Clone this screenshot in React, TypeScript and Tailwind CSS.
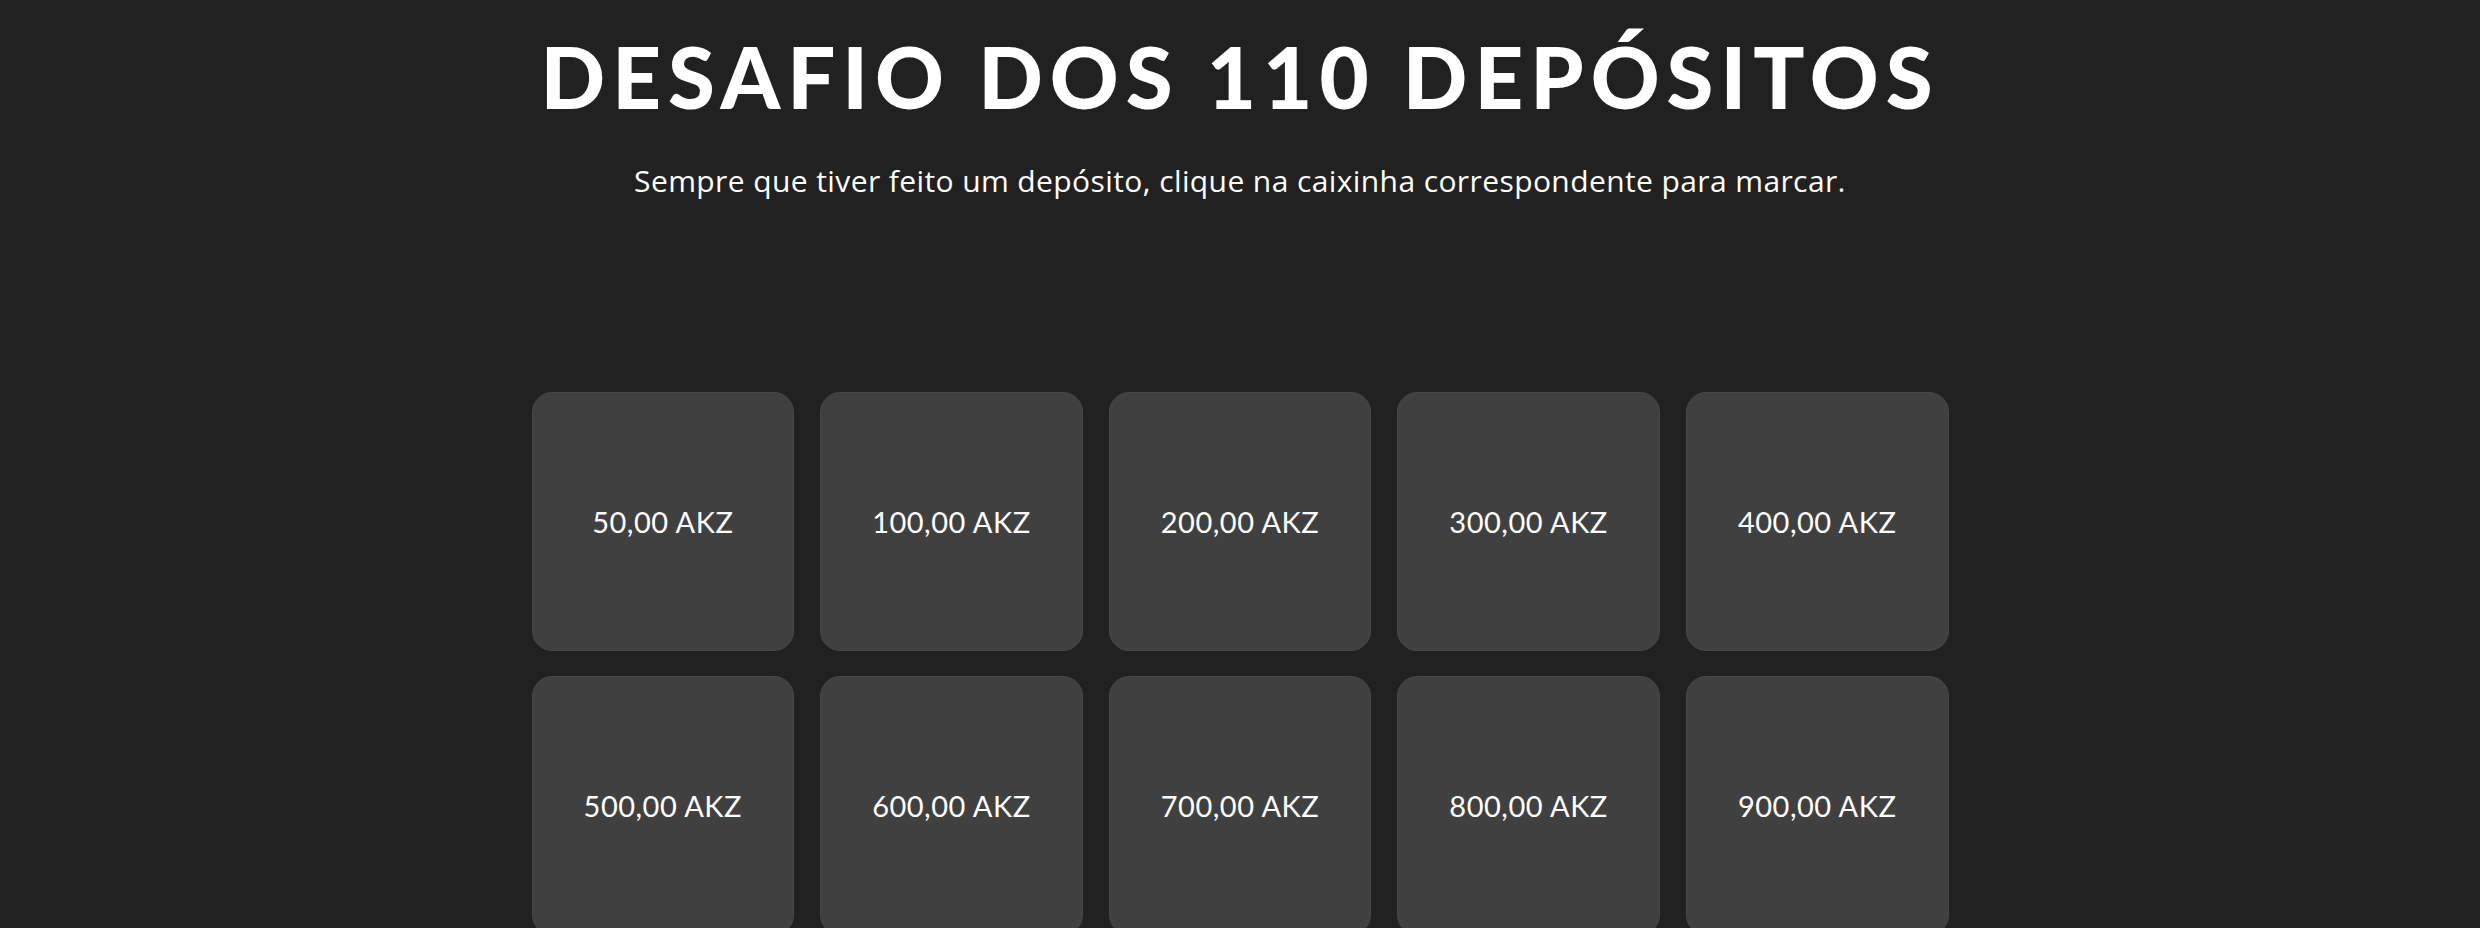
const VALORES = [50, 100, 200, 300, 400, 500, 600, 700, 800, 900];

function formatar(v: number) {
  return v.toFixed(2).replace('.', ',') + ' AKZ';
}

export default function App() {
  return (
    <div className="min-h-screen bg-[#212121] text-white font-['Lato',sans-serif]">
      <div className="mx-auto flex max-w-[1417px] flex-col items-center pt-[34px]">
        <h1 className="text-[85px] font-black leading-none tracking-[7px]">
          DESAFIO DOS 110 DEPÓSITOS
        </h1>
        <p className="mt-[47px] font-['Open_Sans',sans-serif] text-[30px] leading-none tracking-[0.4px]">
          Sempre que tiver feito um depósito, clique na caixinha correspondente para marcar.
        </p>

        <div className="mt-[196px] grid w-full grid-cols-5 gap-x-[26px] gap-y-[25px]">
          {VALORES.map((v) => (
            <button
              key={v}
              className="flex h-[259px] items-center justify-center rounded-[20px] border border-[#474747] bg-[#404040] text-[29px] tracking-[0.5px] text-white"
            >
              {formatar(v)}
            </button>
          ))}
        </div>
      </div>
    </div>
  );
}
